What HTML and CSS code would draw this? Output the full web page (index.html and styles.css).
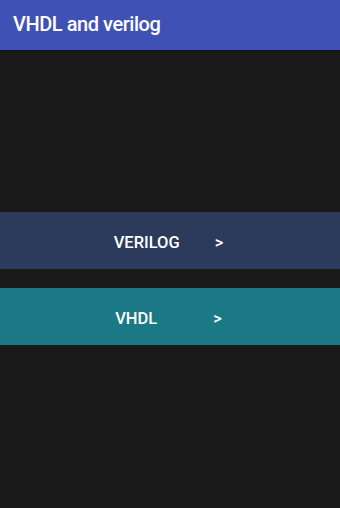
FILE: index.html
```html
<!DOCTYPE html>
<html lang="en">
<head>
    <meta charset="UTF-8">
    <meta name="viewport" content="width=device-width, initial-scale=1.0">
    <title>VHDL and verilog</title>
    <link rel="stylesheet" href="styles.css">
</head>
<body>
    <div class="app">
        <header class="toolbar">
            <h1>VHDL and verilog</h1>
        </header>

        <main class="content">
            <button class="nav-btn btn-verilog">
                <span class="label">VERILOG</span>
                <span class="arrow">&gt;</span>
            </button>
            <button class="nav-btn btn-vhdl">
                <span class="label">VHDL</span>
                <span class="arrow">&gt;</span>
            </button>
        </main>
    </div>
</body>
</html>
```

FILE: styles.css
```css
body {
    margin: 0;
    font-family: Roboto, "Noto Sans", sans-serif;
    background-color: #1a1a1a;
}
.app {
    width: 340px;
    height: 508px;
    background-color: #1a1a1a;
}
.toolbar {
    height: 50px;
    background-color: #3f51b5;
    display: flex;
    align-items: center;
    padding: 0 13px;
    box-sizing: border-box;
    box-shadow: 0 1px 2px rgba(0,0,0,0.4);
}
.toolbar h1 {
    margin: 0;
    margin-top: -2px;
    font-size: 20px;
    font-weight: 500;
    letter-spacing: -0.45px;
    color: #ffffff;
}
.content {
    padding-top: 162px;
    display: flex;
    flex-direction: column;
    gap: 19px;
}
.nav-btn {
    display: flex;
    justify-content: center;
    align-items: center;
    height: 57px;
    width: 100%;
    border: none;
    padding: 3px 3px 0 0;
    box-sizing: border-box;
    font-family: inherit;
    font-size: 16.5px;
    font-weight: 500;
    color: #ffffff;
    cursor: pointer;
}
.btn-verilog {
    background-color: #2c3a5c;
}
.btn-vhdl {
    background-color: #1b7985;
}
.arrow {
    margin-left: 35px;
}
.btn-vhdl .arrow {
    margin-left: 56px;
}
```
